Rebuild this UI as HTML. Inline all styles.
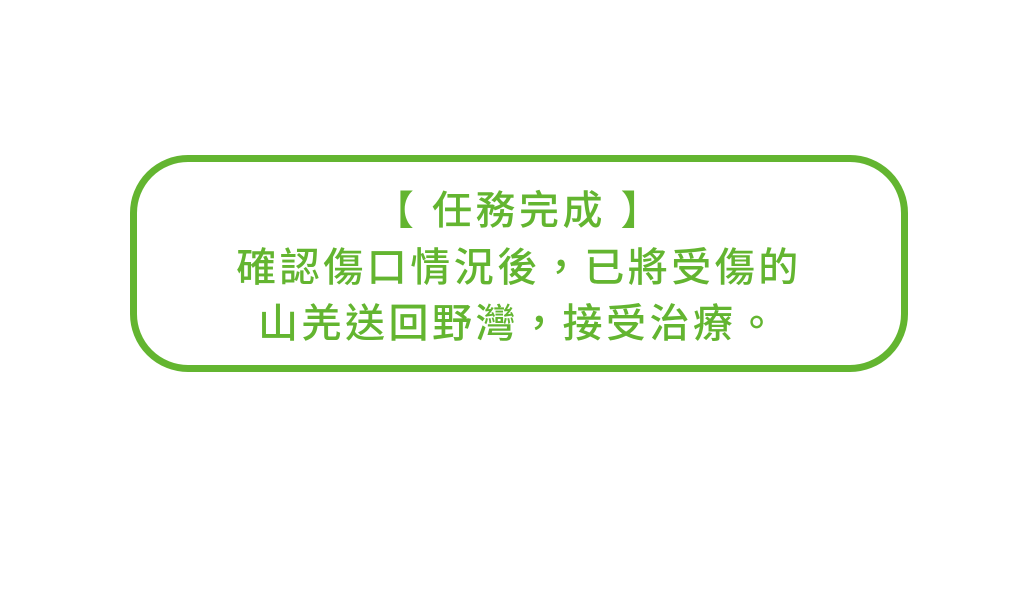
<!DOCTYPE html>
<html><head><meta charset="utf-8"><style>
html,body{margin:0;padding:0;background:#fff;width:1024px;height:606px;overflow:hidden}
.box{position:absolute;left:130px;top:155px;width:764px;height:203px;border:7px solid #63b530;border-radius:58px}
.t{position:absolute;left:130px;width:778px;top:183px;text-align:center;color:#63b530;font-family:"Liberation Sans","Noto Sans CJK TC",sans-serif;font-size:40px;font-weight:500;line-height:56.5px;letter-spacing:3.5px}
</style></head><body>
<div class="box"></div>
<div class="t">【 任務完成 】<br>確認傷口情況後，已將受傷的<br>山羌送回野灣，接受治療。</div>
</body></html>
